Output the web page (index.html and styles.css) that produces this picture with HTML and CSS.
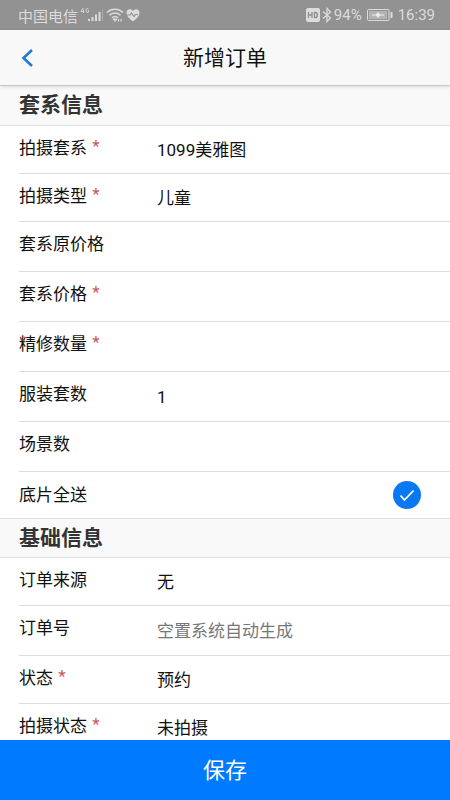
FILE: index.html
```html
<!DOCTYPE html>
<html lang="zh-CN">
<head>
<meta charset="utf-8">
<meta name="viewport" content="width=device-width, initial-scale=1">
<title>新增订单</title>
<link rel="stylesheet" href="styles.css">
</head>
<body>
<div class="status">
  <div class="status-group">
    <span>中国电信</span>
    <svg width="24" height="16" viewBox="0 0 24 16" fill="none" stroke="currentColor" aria-hidden="true">
      <path d="M3 1 1 4.500H4M3.500 2.500V6M8.500 2C7.500 1 6 1.200 6 3.500S8 6 8.500 5V3.700H7.500" stroke-width=".9"/>
      <path d="M9 12v2M12.500 10v4M16 7.500V14M19.500 5v9" stroke-width="2"/>
      <path d="M22.500 2.500V14" stroke-width="1.200" opacity=".3"/>
    </svg>
    <svg width="18" height="16" viewBox="0 0 18 16" fill="none" stroke="currentColor" stroke-width="1.500" aria-hidden="true">
      <path d="M1 5.500C5.500 1.200 12.500 1.200 17 5.500M3.500 8.200C6.500 5.300 11.500 5.300 14.500 8.200M6 10.800C7.800 9.200 10.200 9.200 12 10.800"/>
      <path d="M7.500 12 9 14l1.500-2zM12.500 12v2.500M15 12v2.500" fill="currentColor" stroke-width="1.200"/>
    </svg>
    <svg width="14" height="14" viewBox="0 0 14 14" aria-hidden="true">
      <path d="M7 13.500C3 10.500.5 8 .5 4.800.5 1 5 0 7 3c2-3 6.500-2 6.500 1.800 0 3.200-2.500 5.700-6.500 8.700z" fill="currentColor"/>
      <path d="M1 7h3l1.500-2L8 8.500 9.500 6.500H12" fill="none" stroke="#929292" stroke-width="1.200"/>
    </svg>
  </div>
  <div class="status-group right">
    <svg width="14" height="14" viewBox="0 0 14 14" fill="none" aria-hidden="true">
      <rect width="14" height="14" rx="2" fill="currentColor"/>
      <path d="M2.500 4v6M6 4v6M2.500 7H6M8.500 4.500v5H9.500C12 9.500 12 4.500 9.500 4.500z" stroke="#929292" stroke-width="1.400"/>
    </svg>
    <svg width="10" height="16" viewBox="0 0 10 16" fill="none" stroke="currentColor" stroke-width="1.300" aria-hidden="true">
      <path d="M1 4.500 8.500 11 5 14.500v-13L8.500 5 1 11.500"/>
    </svg>
    <span>94%</span>
    <svg class="battery" width="26" height="12" viewBox="0 0 26 12" aria-hidden="true">
      <rect x=".5" y=".5" width="21.500" height="11" rx="1" fill="none" stroke="currentColor"/>
      <rect x="2" y="2" width="18" height="8" fill="currentColor" opacity=".45"/>
      <path d="M5 5.500h4L11 3l2 2.500h4v1h-4L11 9 9 6.500H5z" fill="#eee"/>
      <rect x="23.500" y="3" width="2" height="6" rx=".5" fill="currentColor"/>
    </svg>
    <span>16:39</span>
  </div>
</div>
<header class="bar">
  <button class="back" type="button" aria-label="返回">
    <svg width="12" height="20" viewBox="0 0 12 20" fill="none" stroke="currentColor" stroke-width="2.600" aria-hidden="true"><path d="M11 2 2.500 10l8.500 8"/></svg>
  </button>
  <h1>新增订单</h1>
</header>
<form class="form" id="order">
  <h2>套系信息</h2>
  <div class="row pick"><label for="f1">拍摄套系 <i>*</i></label><select id="f1"><option>1099美雅图</option></select></div>
  <div class="row pick"><label for="f2">拍摄类型 <i>*</i></label><select id="f2"><option>儿童</option></select></div>
  <div class="row"><label for="f3">套系原价格</label><input id="f3" type="text"></div>
  <div class="row"><label for="f4">套系价格 <i>*</i></label><input id="f4" type="text"></div>
  <div class="row"><label for="f5">精修数量 <i>*</i></label><input id="f5" type="text"></div>
  <div class="row"><label for="f6">服装套数</label><input id="f6" type="text" value="1"></div>
  <div class="row"><label for="f7">场景数</label><input id="f7" type="text"></div>
  <div class="row check"><label for="f8">底片全送</label>
    <span class="tick">
      <input id="f8" type="checkbox" checked>
      <svg width="28" height="28" viewBox="0 0 28 28" fill="none" stroke="#fff" stroke-width="1.800" aria-hidden="true"><path d="m7.500 14.500 4 4.500 9-9.500"/></svg>
    </span>
  </div>
  <h2>基础信息</h2>
  <div class="row pick"><label for="f9">订单来源</label><select id="f9"><option>无</option></select></div>
  <div class="row"><label for="f10">订单号</label><input id="f10" type="text" placeholder="空置系统自动生成"></div>
  <div class="row pick"><label for="f11">状态 <i>*</i></label><select id="f11"><option>预约</option></select></div>
  <div class="row pick"><label for="f12">拍摄状态 <i>*</i></label><select id="f12"><option>未拍摄</option></select></div>
</form>
<button class="save" type="submit" form="order">保存</button>
</body>
</html>
```
FILE: styles.css
```css
* {
  box-sizing: border-box;
}

body {
  margin: 0;
  height: 100vh;
  display: flex;
  flex-direction: column;
  background: #fff;
  color: #111;
  font-family: Roboto, "Noto Sans CJK SC", sans-serif;
  font-size: 17px;
}

button, input, select {
  font: inherit;
  color: inherit;
  border: 0;
  border-radius: 0;
  background: none;
  padding: 0;
  margin: 0;
}

svg {
  display: block;
  flex: none;
}

.status {
  flex: none;
  height: 30px;
  padding: 0 15px 0 18px;
  display: flex;
  align-items: center;
  justify-content: space-between;
  background: #929292;
  color: #dcdcdc;
  font-size: 15px;
}

.status-group {
  display: flex;
  align-items: center;
  gap: 2px;
}

.battery {
  margin: 0 3px;
}

.bar {
  flex: none;
  position: relative;
  z-index: 1;
  height: 56px;
  display: grid;
  grid-template-columns: 60px 1fr 60px;
  align-items: center;
  background: #f8f8f8;
  border-bottom: 1px solid #c8c8c8;
  box-shadow: 0 1px 4px rgba(0, 0, 0, .12);
}

.bar h1 {
  margin: 0;
  text-align: center;
  font-size: 21px;
  line-height: 52px;
  font-weight: 400;
}

.back {
  height: 55px;
  padding-left: 21px;
  color: #2079df;
}

.form {
  flex: 1;
  min-height: 0;
  overflow-y: auto;
  scrollbar-width: none;
}

.form h2 {
  margin: 0;
  height: 40px;
  padding-left: 19px;
  border-bottom: 1px solid #dedede;
  background: #f9f9f9;
  color: #333;
  font-size: 21px;
  line-height: 39px;
  font-weight: 700;
}

.row {
  height: 50px;
  margin-left: 19px;
  display: grid;
  grid-template-columns: 138px 1fr;
  border-bottom: 1px solid #dcdcdc;
}

.pick {
  height: 48px;
}

.row label {
  line-height: 24px;
  padding-top: 10px;
}

.row i {
  margin-left: 1px;
  font-style: normal;
  line-height: 1;
  vertical-align: 2px;
  color: #d0525c;
}

.row input[type="text"], .row select {
  appearance: none;
  width: 100%;
  height: 100%;
  outline: 0;
}

.row input::placeholder {
  color: #777;
  opacity: 1;
}

.row.check {
  height: 46px;
  grid-template-columns: 1fr auto;
  align-items: center;
  padding-right: 29px;
  border-bottom: 0;
}

.check label {
  padding: 0;
}

.check + h2 {
  border-top: 1px solid #dedede;
}

.tick {
  display: grid;
}

.tick > * {
  grid-area: 1 / 1;
}

.tick input {
  appearance: none;
  width: 28px;
  height: 28px;
  border-radius: 50%;
  background: #0b78f3;
}

.tick input:not(:checked) {
  background: #ccc;
}

.tick svg {
  pointer-events: none;
}

.save {
  flex: none;
  height: 60px;
  padding-bottom: 4px;
  background: #007aff;
  color: #fff;
  font-size: 22px;
}
```
